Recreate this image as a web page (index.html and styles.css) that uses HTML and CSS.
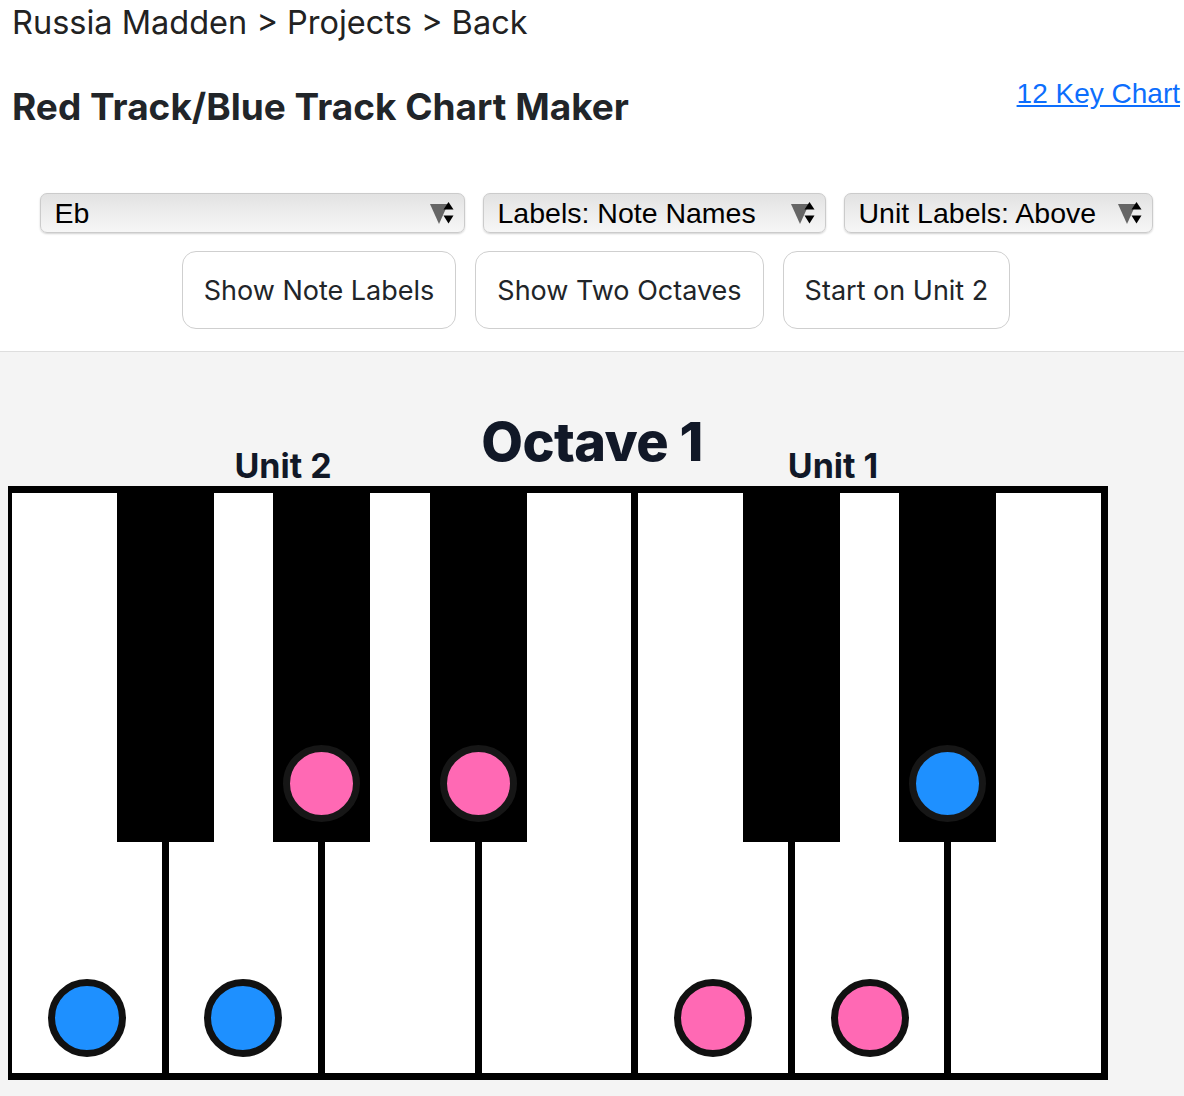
FILE: index.html
```html
<!DOCTYPE html>
<html lang="en">
<head>
<meta charset="utf-8">
<title>Red Track/Blue Track Chart Maker</title>
<link rel="stylesheet" href="styles.css">
</head>
<body>
<header class="top">
  <nav class="crumbs">Russia Madden &gt; Projects &gt; Back</nav>
  <div class="title-row">
    <h1 class="title">Red Track/Blue Track Chart Maker</h1>
    <a class="chart-link" href="#">12 Key Chart</a>
  </div>
  <div class="controls">
    <div class="select-row">
      <div class="select sel-key">
        <select><option>Eb</option></select>
        <svg class="sel-arrow" viewBox="0 0 26 26" aria-hidden="true"><path d="M1 4 L19 4 L10 24 Z" fill="#666"/><path d="M14.5 9.5 L19.5 2 L24.5 9.5 Z" fill="#000"/><path d="M14.5 15.5 L24.5 15.5 L19.5 23.5 Z" fill="#000"/></svg>
      </div>
      <div class="select sel-labels">
        <select><option>Labels: Note Names</option></select>
        <svg class="sel-arrow" viewBox="0 0 26 26" aria-hidden="true"><path d="M1 4 L19 4 L10 24 Z" fill="#666"/><path d="M14.5 9.5 L19.5 2 L24.5 9.5 Z" fill="#000"/><path d="M14.5 15.5 L24.5 15.5 L19.5 23.5 Z" fill="#000"/></svg>
      </div>
      <div class="select sel-units">
        <select><option>Unit Labels: Above</option></select>
        <svg class="sel-arrow" viewBox="0 0 26 26" aria-hidden="true"><path d="M1 4 L19 4 L10 24 Z" fill="#666"/><path d="M14.5 9.5 L19.5 2 L24.5 9.5 Z" fill="#000"/><path d="M14.5 15.5 L24.5 15.5 L19.5 23.5 Z" fill="#000"/></svg>
      </div>
    </div>
    <div class="button-row">
      <button class="btn">Show Note Labels</button>
      <button class="btn">Show Two Octaves</button>
      <button class="btn">Start on Unit 2</button>
    </div>
  </div>
</header>
<main class="stage">
  <h2 class="octave">Octave 1</h2>
  <div class="chart">
    <div class="units">
      <span class="unit">Unit 2</span>
      <span class="unit">Unit 1</span>
    </div>
    <div class="keyboard">
      <div class="white"><span class="dot blue"></span></div>
      <div class="white"><span class="dot blue"></span></div>
      <div class="white"></div>
      <div class="white"></div>
      <div class="white"><span class="dot pink"></span></div>
      <div class="white"><span class="dot pink"></span></div>
      <div class="white last"></div>
      <div class="black b1"></div>
      <div class="black b2"><span class="dot dark pink"></span></div>
      <div class="black b3"><span class="dot dark pink"></span></div>
      <div class="black b4"></div>
      <div class="black b5"><span class="dot dark blue"></span></div>
    </div>
  </div>
</main>
</body>
</html>
```
FILE: styles.css
```css
html, body {
  margin: 0;
  padding: 0;
}
body {
  font-family: Inter, "Noto Sans", sans-serif;
  color: #212529;
  background: #fff;
}
.top {
  padding: 0 4px 22px 12px;
  border-bottom: 1px solid #dedede;
}
.crumbs {
  font-size: 32.5px;
  line-height: 46px;
  color: #222;
}
.title-row {
  display: flex;
  justify-content: space-between;
  align-items: flex-start;
  margin-top: 30px;
}
.title {
  margin: 8px 0 0;
  font-size: 37px;
  line-height: 46px;
  font-weight: 700;
  color: #212529;
}
.chart-link {
  font-family: "Liberation Sans", Arial, sans-serif;
  font-size: 28px;
  line-height: 36px;
  color: #0d6efd;
  text-decoration: underline;
}
.controls {
  margin-top: 63px;
  display: flex;
  flex-direction: column;
  align-items: center;
  gap: 18px;
}
.select-row {
  display: flex;
  gap: 18px;
}
.select {
  position: relative;
  height: 40px;
}
.sel-key { width: 425px; }
.sel-labels { width: 343px; }
.sel-units { width: 309px; }
.select select {
  appearance: none;
  -webkit-appearance: none;
  width: 100%;
  height: 100%;
  box-sizing: border-box;
  margin: 0;
  padding: 0 0 0 14px;
  font-family: "Liberation Sans", Arial, sans-serif;
  font-size: 28.5px;
  color: #000;
  border: 1px solid #cbcbcb;
  border-radius: 7px;
  background: linear-gradient(to bottom, #e2e2e2 0%, #ececec 45%, #f6f6f6 100%);
  box-shadow: 0 1px 2px rgba(0, 0, 0, 0.18);
}
.sel-arrow {
  position: absolute;
  right: 10px;
  top: 7px;
  width: 26px;
  height: 26px;
}
.button-row {
  display: flex;
  gap: 19px;
}
.btn {
  height: 78px;
  padding: 0 21px;
  font-family: Inter, sans-serif;
  font-size: 27px;
  color: #212529;
  background: #fff;
  border: 1.5px solid #cfcfcf;
  border-radius: 14px;
}
.stage {
  background: #f4f4f4;
  padding: 58px 8px 16px;
}
.octave {
  margin: 0;
  text-align: center;
  font-size: 54px;
  line-height: 64px;
  font-weight: 800;
  letter-spacing: -0.01em;
  color: #111827;
}
.chart {
  width: 1100px;
}
.units {
  display: grid;
  grid-template-columns: 1fr 1fr;
  margin-top: -28px;
  height: 40px;
}
.unit {
  text-align: center;
  font-size: 34px;
  line-height: 40px;
  font-weight: 700;
  color: #111827;
}
.keyboard {
  position: relative;
  display: flex;
  height: 594px;
  box-sizing: border-box;
  border: 7px solid #000;
  border-left-width: 4px;
  background: #fff;
}
.white {
  flex: 1;
  border-right: 7px solid #000;
  display: flex;
  align-items: flex-end;
  justify-content: center;
  padding-bottom: 16px;
}
.white.last {
  border-right: 0;
}
.black {
  position: absolute;
  top: 0;
  width: 97px;
  height: 349px;
  background: #000;
  display: flex;
  align-items: flex-end;
  justify-content: center;
  padding-bottom: 20px;
  box-sizing: border-box;
}
.b1 { left: 104.6px; }
.b2 { left: 261.1px; }
.b3 { left: 417.7px; }
.b4 { left: 730.8px; }
.b5 { left: 887.4px; }
.dot {
  display: block;
  width: 78px;
  height: 78px;
  box-sizing: border-box;
  border-radius: 50%;
  border: 7px solid #111;
}
.dot.dark {
  width: 77px;
  height: 77px;
  border-color: #161616;
}
.pink { background: #ff69b4; }
.blue { background: #1e90ff; }
```
